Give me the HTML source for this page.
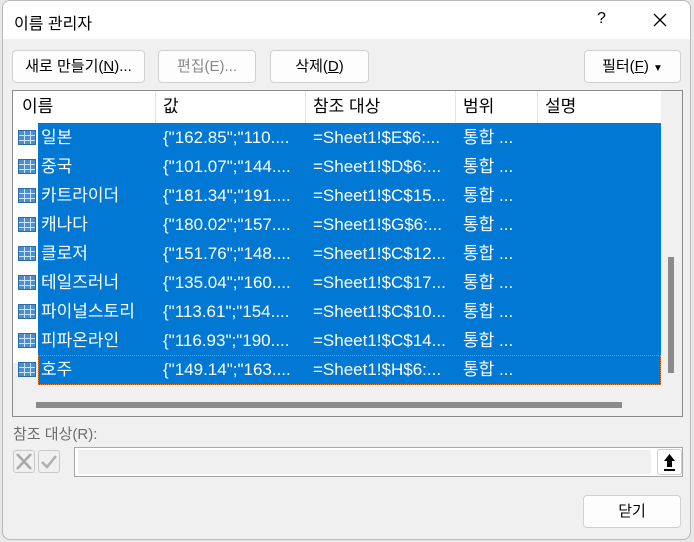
<!DOCTYPE html><html><head><meta charset="utf-8"><style>
*{box-sizing:border-box;margin:0;padding:0}
body{width:694px;height:542px;background:#e8e8e8;position:relative;overflow:hidden;font-family:"Liberation Sans","Noto Sans CJK KR",sans-serif;font-size:16px;color:#000}
.win{position:absolute;left:2px;top:0;width:689px;height:540px;background:#f0f0f0;border:1px solid #b8b8b8;border-radius:8px;overflow:hidden}
.title{position:absolute;left:0;top:0;width:100%;height:38px;background:#fff}
.a{position:absolute;white-space:nowrap}
.btn{position:absolute;background:#fdfdfd;border:1px solid #d0d0d0;border-radius:4px;text-align:center;font-size:15px;line-height:31px}
.list{position:absolute;left:9px;top:89px;width:671px;height:327px;border:1px solid #8a8a8a;background:#f0f0f0}
.white{position:absolute;left:0;top:0;width:648px;height:272px;background:#fff}
.hd{position:absolute;top:0;height:32px;line-height:32px;font-size:17px}
.sep{position:absolute;top:0;width:1px;height:32px;background:#e5e5e5}
.sel{position:absolute;left:25px;top:32px;width:623px;height:262px;background:#0078d4}
.row{position:absolute;left:0;height:29px;line-height:29px;color:#fff;font-size:17px;width:648px}
.row span{position:absolute}
.ic{position:absolute;left:5px;top:7px;width:18px;height:15px;background:#4a90d0;border:1px solid #2b6aa8;
background-image:linear-gradient(90deg,transparent 5px,#cfe3f5 5px,#cfe3f5 6px,transparent 6px,transparent 11px,#cfe3f5 11px,#cfe3f5 12px,transparent 12px),linear-gradient(transparent 4px,#cfe3f5 4px,#cfe3f5 5px,transparent 5px,transparent 9px,#cfe3f5 9px,#cfe3f5 10px,transparent 10px)}
</style></head><body>
<div class="win">
<div class="title"></div>
<div class="a" style="left:11px;top:9px;font-size:16px">이름 관리자</div>
<div class="a" style="left:594px;top:9px;font-size:16px">?</div>
<svg class="a" style="left:650px;top:12px" width="14" height="14"><path d="M1 1L13 13M13 1L1 13" stroke="#000" stroke-width="1.3"/></svg>
<div class="btn" style="left:9px;top:49px;width:133px;height:33px">새로 만들기(<u>N</u>)...</div>
<div class="btn" style="left:155px;top:49px;width:98px;height:33px;color:#888">편집(E)...</div>
<div class="btn" style="left:267px;top:49px;width:99px;height:33px">삭제(<u>D</u>)</div>
<div class="btn" style="left:581px;top:49px;width:97px;height:33px">필터(<u>F</u>) <span style="font-size:10px">▼</span></div>
<div class="list">
<div class="white"></div>
<div class="hd" style="left:9px">이름</div><div class="sep" style="left:142px"></div>
<div class="hd" style="left:150px">값</div><div class="sep" style="left:292px"></div>
<div class="hd" style="left:300px">참조 대상</div><div class="sep" style="left:442px"></div>
<div class="hd" style="left:450px">범위</div><div class="sep" style="left:524px"></div>
<div class="hd" style="left:532px">설명</div>
<div class="sel"></div>
<div style="position:absolute;left:25px;top:264px;width:623px;height:30px;border:1px dotted #e08030"></div>
<div class="row" style="top:32px"><i class="ic"></i><span style="left:28px">일본</span><span style="left:150px">{"162.85";"110....</span><span style="left:300px">=Sheet1!$E$6:...</span><span style="left:450px">통합 ...</span></div>
<div class="row" style="top:61px"><i class="ic"></i><span style="left:28px">중국</span><span style="left:150px">{"101.07";"144....</span><span style="left:300px">=Sheet1!$D$6:...</span><span style="left:450px">통합 ...</span></div>
<div class="row" style="top:90px"><i class="ic"></i><span style="left:28px">카트라이더</span><span style="left:150px">{"181.34";"191....</span><span style="left:300px">=Sheet1!$C$15...</span><span style="left:450px">통합 ...</span></div>
<div class="row" style="top:119px"><i class="ic"></i><span style="left:28px">캐나다</span><span style="left:150px">{"180.02";"157....</span><span style="left:300px">=Sheet1!$G$6:...</span><span style="left:450px">통합 ...</span></div>
<div class="row" style="top:148px"><i class="ic"></i><span style="left:28px">클로저</span><span style="left:150px">{"151.76";"148....</span><span style="left:300px">=Sheet1!$C$12...</span><span style="left:450px">통합 ...</span></div>
<div class="row" style="top:177px"><i class="ic"></i><span style="left:28px">테일즈러너</span><span style="left:150px">{"135.04";"160....</span><span style="left:300px">=Sheet1!$C$17...</span><span style="left:450px">통합 ...</span></div>
<div class="row" style="top:206px"><i class="ic"></i><span style="left:28px">파이널스토리</span><span style="left:150px">{"113.61";"154....</span><span style="left:300px">=Sheet1!$C$10...</span><span style="left:450px">통합 ...</span></div>
<div class="row" style="top:235px"><i class="ic"></i><span style="left:28px">피파온라인</span><span style="left:150px">{"116.93";"190....</span><span style="left:300px">=Sheet1!$C$14...</span><span style="left:450px">통합 ...</span></div>
<div class="row" style="top:264px"><i class="ic"></i><span style="left:28px">호주</span><span style="left:150px">{"149.14";"163....</span><span style="left:300px">=Sheet1!$H$6:...</span><span style="left:450px">통합 ...</span></div>
<div style="position:absolute;left:655px;top:166px;width:6px;height:116px;background:#8a8a8a"></div>
<div style="position:absolute;left:23px;top:311px;width:586px;height:6px;background:#8a8a8a"></div>
</div>
<div class="a" style="left:10px;top:422px;font-size:15px;color:#6d6d6d">참조 대상(R):</div>
<div style="position:absolute;left:10px;top:449px;width:22px;height:23px;border:1px solid #c8c8c8;border-radius:3px"><svg width="20" height="21"><path d="M3 3L17 18M17 3L3 18" stroke="#a8a8a8" stroke-width="2.5"/></svg></div>
<div style="position:absolute;left:35px;top:449px;width:22px;height:23px;border:1px solid #c8c8c8;border-radius:3px"><svg width="20" height="21"><path d="M3 11L8 16L17 5" stroke="#b0b0b0" stroke-width="2.5" fill="none"/></svg></div>
<div style="position:absolute;left:71px;top:446px;width:609px;height:30px;border:1px solid #a8a8a8;background:#fff"><div style="position:absolute;left:3px;top:2px;width:573px;height:24px;background:#f0f0f0"></div>
<div style="position:absolute;left:582px;top:1px;width:25px;height:26px;border:1px solid #d0d0d0;border-radius:3px;background:#fdfdfd"><svg width="23" height="24"><path d="M11.5 4L6 11H9V17H14V11H17Z" fill="#000"/><rect x="6" y="19" width="11" height="2"/></svg></div></div>
<div class="btn" style="left:580px;top:494px;width:98px;height:33px">닫기</div>
</div>
</body></html>
